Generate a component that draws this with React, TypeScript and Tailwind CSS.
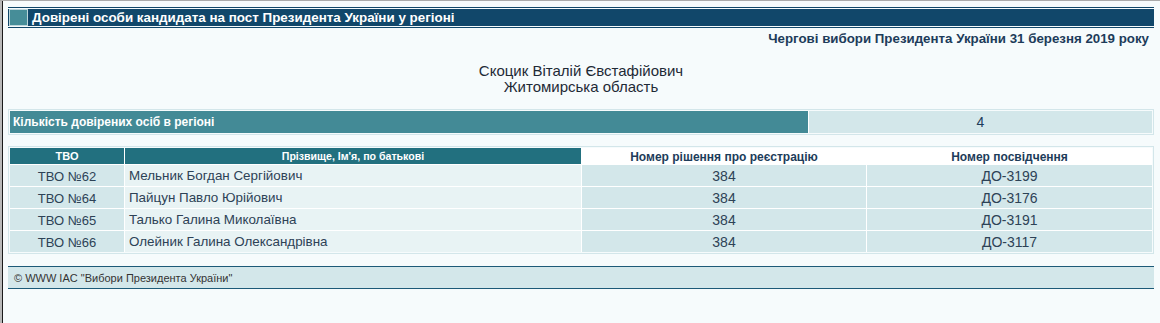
import React from 'react'

const rows = [
  { tvo: 'ТВО №62', name: 'Мельник Богдан Сергійович', decision: '384', cert: 'ДО-3199' },
  { tvo: 'ТВО №64', name: 'Пайцун Павло Юрійович', decision: '384', cert: 'ДО-3176' },
  { tvo: 'ТВО №65', name: 'Талько Галина Миколаївна', decision: '384', cert: 'ДО-3191' },
  { tvo: 'ТВО №66', name: 'Олейник Галина Олександрівна', decision: '384', cert: 'ДО-3117' },
]

export default function App() {
  return (
    <div className="h-[323px] w-[1160px] overflow-hidden border-t border-[#ababab] bg-[#b9b9b9] pl-[2px] font-['Liberation_Sans',Arial,sans-serif]">
      <div className="h-full border-l border-[#1a1a1a] bg-[#f6fbfc] pr-[6px] pl-[5px] pt-[6px]">
        {/* Page title bar */}
        <div className="border-y border-[#11476a] py-px">
          <div className="flex h-[17px] items-center bg-[#11476a] pl-px">
            <div className="h-[17px] w-[19px] border border-[#bcd6db] bg-[#468d98]" />
            <h1 className="ml-[4px] text-[13.4px] leading-none font-bold text-white">
              Довірені особи кандидата на пост Президента України у регіоні
            </h1>
          </div>
        </div>

        <div className="mt-[3px] pr-[5px] text-right text-[13.3px] leading-[16px] font-bold text-[#1d3c5a]">
          Чергові вибори Президента України 31 березня 2019 року
        </div>

        {/* Candidate */}
        <div className="mt-[16px] text-center text-[15px] leading-[16px] text-[#1e2a36]">
          <div>Скоцик Віталій Євстафійович</div>
          <div>Житомирська область</div>
        </div>

        {/* Summary */}
        <div className="mt-[14px] border border-[#d3e6ea] p-px">
          <div className="grid grid-cols-[798px_1fr] gap-px bg-white">
            <div className="flex h-[22px] items-center bg-[#438a96] pl-[3px] text-[12px] font-bold text-white">
              Кількість довірених осіб в регіоні
            </div>
            <div className="flex h-[22px] items-center justify-center bg-[#d3e7ea] pt-px text-[14px] text-[#1d3c5a]">
              4
            </div>
          </div>
        </div>

        {/* Trusted persons table */}
        <div className="mt-[11px] border border-[#d3e6ea] p-px">
          <div className="grid grid-cols-[114px_456px_284px_1fr] gap-px bg-white">
            <div className="flex h-[16px] items-center justify-center bg-[#22707f] pt-px text-[11px] font-bold text-white">ТВО</div>
            <div className="flex h-[16px] items-center justify-center bg-[#22707f] pt-px text-[10.6px] font-bold text-white">
              Прізвище, Ім'я, по батькові
            </div>
            <div className="flex h-[16px] items-center justify-center bg-white pt-px text-[12px] font-bold text-[#1d3c5a]">
              Номер рішення про реєстрацію
            </div>
            <div className="flex h-[16px] items-center justify-center bg-white pt-px text-[12px] font-bold text-[#1d3c5a]">
              Номер посвідчення
            </div>
            {rows.map((r) => (
              <React.Fragment key={r.tvo}>
                <div className="flex h-[21px] items-center justify-center bg-[#d3e7ea] pt-[2px] text-[13px] text-[#2d4256]">{r.tvo}</div>
                <div className="flex h-[21px] items-center bg-[#e8f3f4] pt-[2px] pl-[4px] text-[13.4px] text-[#2d4256]">{r.name}</div>
                <div className="flex h-[21px] items-center justify-center bg-[#d3e7ea] pt-[2px] text-[14px] text-[#2d4256]">{r.decision}</div>
                <div className="flex h-[21px] items-center justify-center bg-[#d3e7ea] pt-[2px] text-[14px] text-[#2d4256]">{r.cert}</div>
              </React.Fragment>
            ))}
          </div>
        </div>

        {/* Footer */}
        <div className="mt-[12px] flex h-[23px] items-center border-y border-[#1c5a78] bg-[#d3e7ea] pt-[2px] pl-[6px] text-[11px] text-[#333]">
          © WWW IAC "Вибори Президента України"
        </div>
      </div>
    </div>
  )
}
